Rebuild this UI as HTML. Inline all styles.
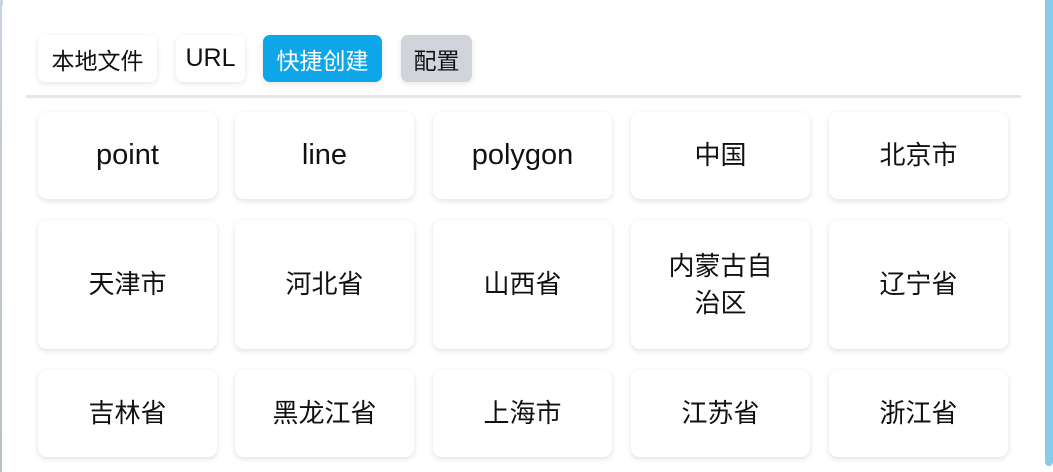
<!DOCTYPE html>
<html><head><meta charset="utf-8"><style>
*{box-sizing:border-box;margin:0;padding:0}
html,body{width:1053px;height:472px;overflow:hidden;background:#fff}
body{position:relative;font-family:"Liberation Sans","Noto Sans CJK SC",sans-serif;color:#111}
.edge{position:absolute;left:0;top:0;width:3px;height:472px;background:linear-gradient(#c8d3e0,#b7c2c4)}
.strip{position:absolute;left:1045px;top:0;width:8px;height:466px;background:#87cbe6;border-radius:0 0 4px 4px}
.panel{position:absolute;left:2px;top:0;width:1043px;height:472px;background:#fff;border-radius:8px 8px 0 0}
.tab{position:absolute;top:35px;height:47px;border-radius:7px;font-size:23px;display:flex;align-items:center;justify-content:center;box-shadow:0 2px 6px rgba(0,0,0,.1);background:#fff}
.div{position:absolute;left:26px;top:95px;width:995px;height:3px;background:#e5e7eb}
.card{position:absolute;width:179px;background:#fff;border-radius:9px;box-shadow:0 2px 6px rgba(0,0,0,.12);display:flex;align-items:center;justify-content:center;text-align:center;font-size:26px;line-height:37px}
.l{font-size:29px}
</style></head><body>
<div class="edge"></div>
<div class="panel"></div>
<div class="strip"></div>
<div class="tab" style="left:38px;width:119px">本地文件</div>
<div class="tab" style="left:176px;width:69px;font-size:25px">URL</div>
<div class="tab" style="left:263px;width:119px;background:#0ea5e9;color:#fff">快捷创建</div>
<div class="tab" style="left:401px;width:71px;background:#d1d5db">配置</div>
<div class="div"></div>

<div class="card l" style="left:38px;top:112px;height:87px">point</div>
<div class="card l" style="left:235px;top:112px;height:87px">line</div>
<div class="card l" style="left:433px;top:112px;height:87px">polygon</div>
<div class="card" style="left:631px;top:112px;height:87px">中国</div>
<div class="card" style="left:829px;top:112px;height:87px">北京市</div>

<div class="card" style="left:38px;top:220px;height:129px">天津市</div>
<div class="card" style="left:235px;top:220px;height:129px">河北省</div>
<div class="card" style="left:433px;top:220px;height:129px">山西省</div>
<div class="card" style="left:631px;top:220px;height:129px;padding:0 30px">内蒙古自治区</div>
<div class="card" style="left:829px;top:220px;height:129px">辽宁省</div>

<div class="card" style="left:38px;top:370px;height:87px">吉林省</div>
<div class="card" style="left:235px;top:370px;height:87px">黑龙江省</div>
<div class="card" style="left:433px;top:370px;height:87px">上海市</div>
<div class="card" style="left:631px;top:370px;height:87px">江苏省</div>
<div class="card" style="left:829px;top:370px;height:87px">浙江省</div>
</body></html>
